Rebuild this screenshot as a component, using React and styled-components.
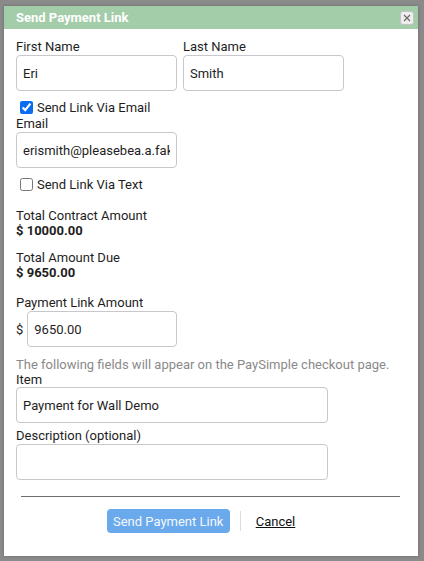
import styled, { createGlobalStyle } from "styled-components";

const GlobalStyle = createGlobalStyle`
  html, body {
    margin: 0;
    padding: 0;
    background: #8a8a8a;
    font-family: Roboto, "Liberation Sans", Arial, sans-serif;
  }
  * { box-sizing: border-box; }
`;

const Backdrop = styled.div`
  width: 424px;
  height: 561px;
  padding: 6px 6px 0 4px;
  background: #8a8a8a;
  overflow: hidden;
`;

const Dialog = styled.div`
  width: 414px;
  height: 550px;
  background: #fff;
  display: flex;
  flex-direction: column;
  box-shadow: 0 0 3px rgba(0, 0, 0, 0.25);
`;

const TitleBar = styled.div`
  height: 23px;
  background: #a3cca9;
  display: flex;
  align-items: center;
  justify-content: space-between;
  padding: 0 4px 0 12px;
`;

const Title = styled.span`
  color: #fff;
  font-size: 13px;
  font-weight: 700;
`;

const CloseButton = styled.button`
  width: 14px;
  height: 14px;
  padding: 0;
  border: 1px solid #c4c4c4;
  border-radius: 3px;
  background: #eeeeee;
  display: flex;
  align-items: center;
  justify-content: center;
`;

const Body = styled.div`
  padding: 10px 12px 0 12px;
  display: flex;
  flex-direction: column;
`;

const Row = styled.div`
  display: flex;
  gap: 6px;
`;

const Field = styled.div`
  display: flex;
  flex-direction: column;
  margin-top: ${(p) => p.$top || 0}px;
`;

const Label = styled.label`
  font-size: 13px;
  line-height: ${(p) => p.$lh || 16}px;
  color: #1e1e1e;
`;

const Input = styled.input`
  width: ${(p) => p.$w}px;
  height: 36px;
  border: 1px solid #c8c8cc;
  border-radius: 4px;
  padding: 0 6px;
  font-family: inherit;
  font-size: 13px;
  color: #1e1e1e;
  background: #fff;
  outline: none;
`;

const CheckRow = styled.label`
  display: flex;
  align-items: center;
  height: ${(p) => p.$h || 16}px;
  margin-top: ${(p) => p.$top || 0}px;
  font-size: 13px;
  color: #1e1e1e;
  input {
    margin: 0 4px 0 4px;
    width: 13px;
    height: 13px;
    accent-color: #0b6cf0;
  }
`;

const Summary = styled.div`
  display: flex;
  flex-direction: column;
  margin-top: ${(p) => p.$top}px;
  font-size: 13px;
  line-height: 15px;
  color: #1e1e1e;
  strong { font-weight: 700; }
`;

const AmountRow = styled.div`
  display: flex;
  align-items: center;
  gap: 4px;
  font-size: 13px;
  color: #1e1e1e;
`;

const Hint = styled.div`
  margin-top: 11px;
  font-size: 13px;
  line-height: 14px;
  color: #8a8a8a;
`;

const Divider = styled.hr`
  margin: 16px 6px 0 5px;
  border: none;
  border-top: 1px solid #6e6e6e;
  height: 0;
`;

const Actions = styled.div`
  display: flex;
  align-items: center;
  justify-content: center;
  padding-right: 20px;
  margin-top: 12px;
`;

const PrimaryButton = styled.button`
  width: 123px;
  height: 24px;
  border: none;
  border-radius: 4px;
  background: #6aa9ec;
  color: #f4f8fd;
  font-family: inherit;
  font-size: 13px;
  padding: 0;
`;

const Separator = styled.span`
  width: 1px;
  height: 20px;
  background: #dcdcdc;
  margin: 0 15px 0 10px;
`;

const CancelLink = styled.a`
  font-size: 13px;
  color: #111;
  text-decoration: underline;
`;

export default function App() {
  return (
    <>
      <GlobalStyle />
      <Backdrop>
        <Dialog>
          <TitleBar>
            <Title>Send Payment Link</Title>
            <CloseButton aria-label="close">
              <svg width="8" height="8" viewBox="0 0 8 8">
                <path d="M1 1L7 7M7 1L1 7" stroke="#6b6b6b" strokeWidth="1.3" />
              </svg>
            </CloseButton>
          </TitleBar>
          <Body>
            <Row>
              <Field>
                <Label>First Name</Label>
                <Input $w={161} defaultValue="Eri" />
              </Field>
              <Field>
                <Label>Last Name</Label>
                <Input $w={161} defaultValue="Smith" />
              </Field>
            </Row>
            <CheckRow $top={7} $h={18}>
              <input type="checkbox" defaultChecked />
              Send Link Via Email
            </CheckRow>
            <Field>
              <Label>Email</Label>
              <Input $w={161} defaultValue="erismith@pleasebea.a.fake.email" />
            </Field>
            <CheckRow $top={8}>
              <input type="checkbox" />
              Send Link Via Text
            </CheckRow>
            <Summary $top={16}>
              <span>Total Contract Amount</span>
              <strong>$ 10000.00</strong>
            </Summary>
            <Summary $top={12}>
              <span>Total Amount Due</span>
              <strong>$ 9650.00</strong>
            </Summary>
            <Field $top={15}>
              <Label>Payment Link Amount</Label>
              <AmountRow>
                $
                <Input $w={150} defaultValue="9650.00" />
              </AmountRow>
            </Field>
            <Hint>The following fields will appear on the PaySimple checkout page.</Hint>
            <Field>
              <Label $lh={15}>Item</Label>
              <Input $w={312} defaultValue="Payment for Wall Demo" />
            </Field>
            <Field $top={5}>
              <Label>Description (optional)</Label>
              <Input $w={312} defaultValue="" />
            </Field>
            <Divider />
            <Actions>
              <PrimaryButton>Send Payment Link</PrimaryButton>
              <Separator />
              <CancelLink>Cancel</CancelLink>
            </Actions>
          </Body>
        </Dialog>
      </Backdrop>
    </>
  );
}
